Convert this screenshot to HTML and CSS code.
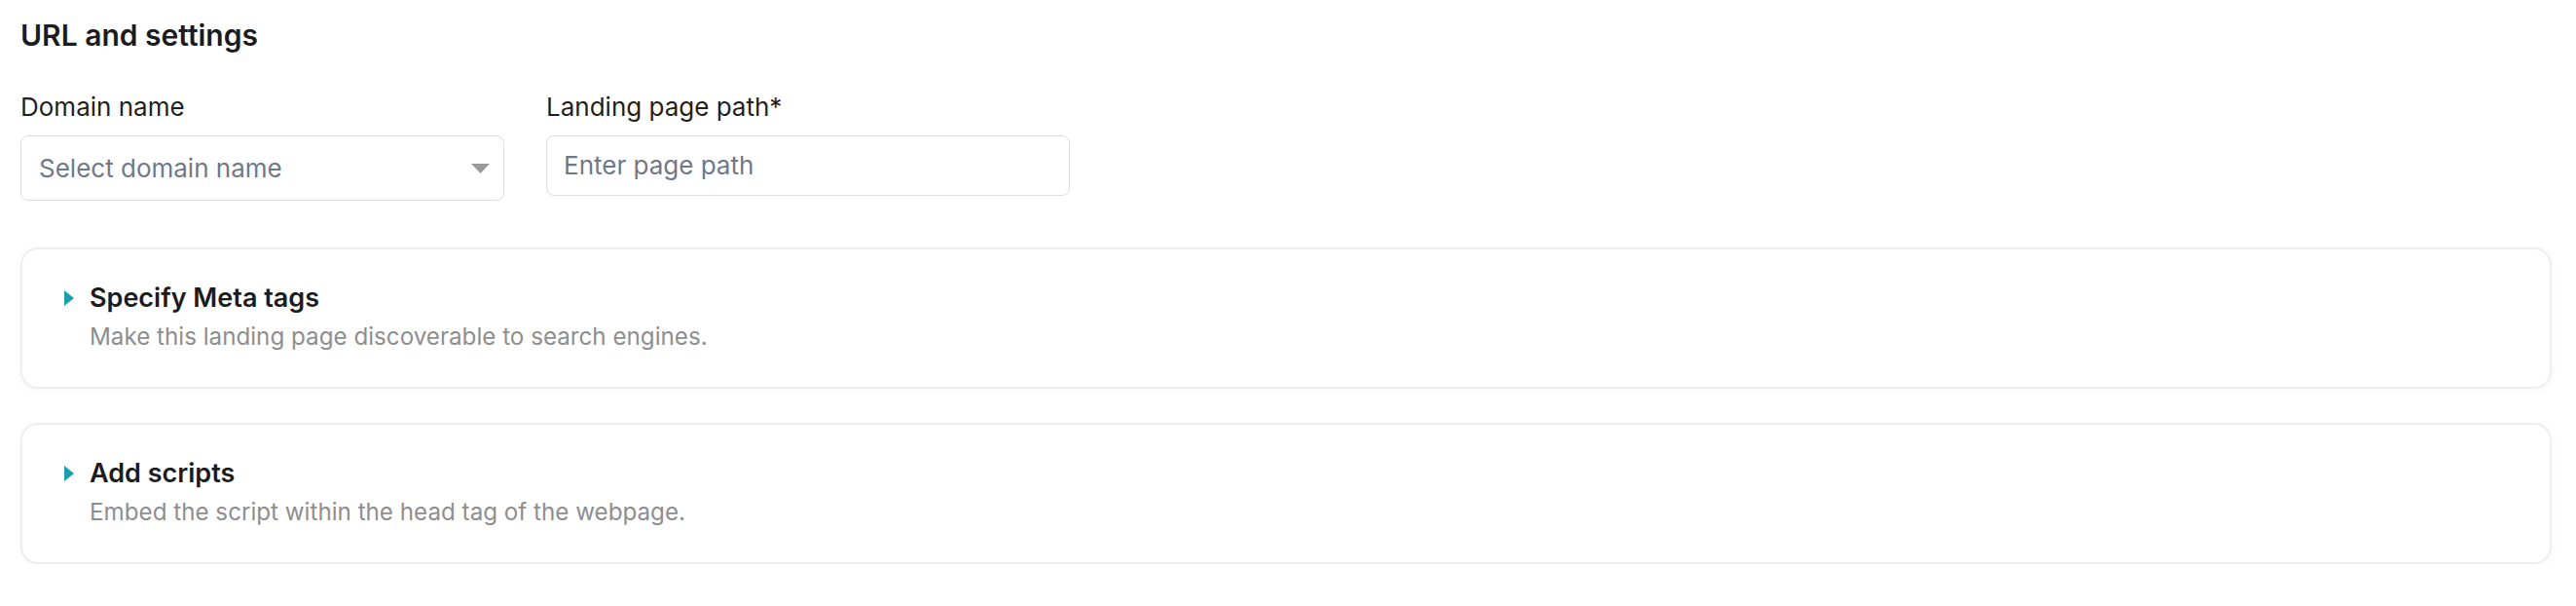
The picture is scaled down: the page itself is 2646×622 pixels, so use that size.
FILE: index.html
```html
<!DOCTYPE html>
<html lang="en">
<head>
<meta charset="utf-8">
<title>URL and settings</title>
<link rel="stylesheet" href="styles.css">
</head>
<body>
<main class="page">
  <h2 class="section-title">URL and settings</h2>
  <div class="fields">
    <div class="field field-domain">
      <label class="field-label">Domain name</label>
      <div class="select">
        <span class="placeholder">Select domain name</span>
        <svg class="caret" width="19" height="10" viewBox="0 0 19 10"><path d="M0 0 H19 L9.5 10 Z" fill="#9a9a9a"/></svg>
      </div>
    </div>
    <div class="field field-path">
      <label class="field-label">Landing page path*</label>
      <div class="input"><span class="placeholder">Enter page path</span></div>
    </div>
  </div>

  <section class="card">
    <div class="card-head">
      <svg class="tri" width="10" height="16" viewBox="0 0 10 16"><path d="M0 0 L10 8 L0 16 Z" fill="#1a9fab"/></svg>
      <h3 class="card-title">Specify Meta tags</h3>
    </div>
    <p class="card-sub">Make this landing page discoverable to search engines.</p>
  </section>

  <section class="card">
    <div class="card-head">
      <svg class="tri" width="10" height="16" viewBox="0 0 10 16"><path d="M0 0 L10 8 L0 16 Z" fill="#1a9fab"/></svg>
      <h3 class="card-title">Add scripts</h3>
    </div>
    <p class="card-sub">Embed the script within the head tag of the webpage.</p>
  </section>
</main>
</body>
</html>
```

FILE: styles.css
```css
* { box-sizing: border-box; }
html, body { margin: 0; padding: 0; background: #ffffff; }
body {
  font-family: Inter, "Noto Sans", "Liberation Sans", sans-serif;
  color: #1e1e1f;
}
.page {
  padding: 18px 25px 0 21px;
}
.section-title {
  margin: 0;
  font-size: 30px;
  line-height: 36px;
  font-weight: 600;
  color: #1c1c1e;
}
.fields {
  display: flex;
  align-items: flex-start;
  gap: 43px;
  margin-top: 40px;
}
.field { display: flex; flex-direction: column; }
.field-domain { width: 497px; }
.field-path { width: 538px; }
.field-label {
  font-size: 26px;
  line-height: 32px;
  font-weight: 400;
  color: #1f1f20;
  margin-bottom: 13px;
}
.select, .input {
  display: flex;
  align-items: center;
  border: 1.5px solid #d9dde3;
  border-radius: 8px;
  background: #fff;
}
.select {
  height: 67px;
  padding: 0 14px 0 18px;
  justify-content: space-between;
}
.input {
  height: 62px;
  padding: 0 0 0 17px;
}
.placeholder {
  font-size: 26px;
  line-height: 32px;
  color: #6f7887;
}
.caret { display: block; }
.card {
  margin-top: 35px;
  border: 2px solid #eceef1;
  border-radius: 18px;
  box-shadow: 0 2px 8px rgba(20, 30, 50, 0.035);
  padding: 34px 20px 35px 43px;
  background: #fff;
}
.fields + .card { margin-top: 48px; }
.card-head {
  display: flex;
  align-items: center;
  gap: 16px;
}
.tri { display: block; flex: none; }
.card-title {
  margin: 0;
  font-size: 27px;
  line-height: 32px;
  font-weight: 600;
  color: #1c1c1e;
}
.card-sub {
  margin: 8px 0 0 26px;
  font-size: 24.2px;
  line-height: 32px;
  color: #8e8e8f;
}
```
